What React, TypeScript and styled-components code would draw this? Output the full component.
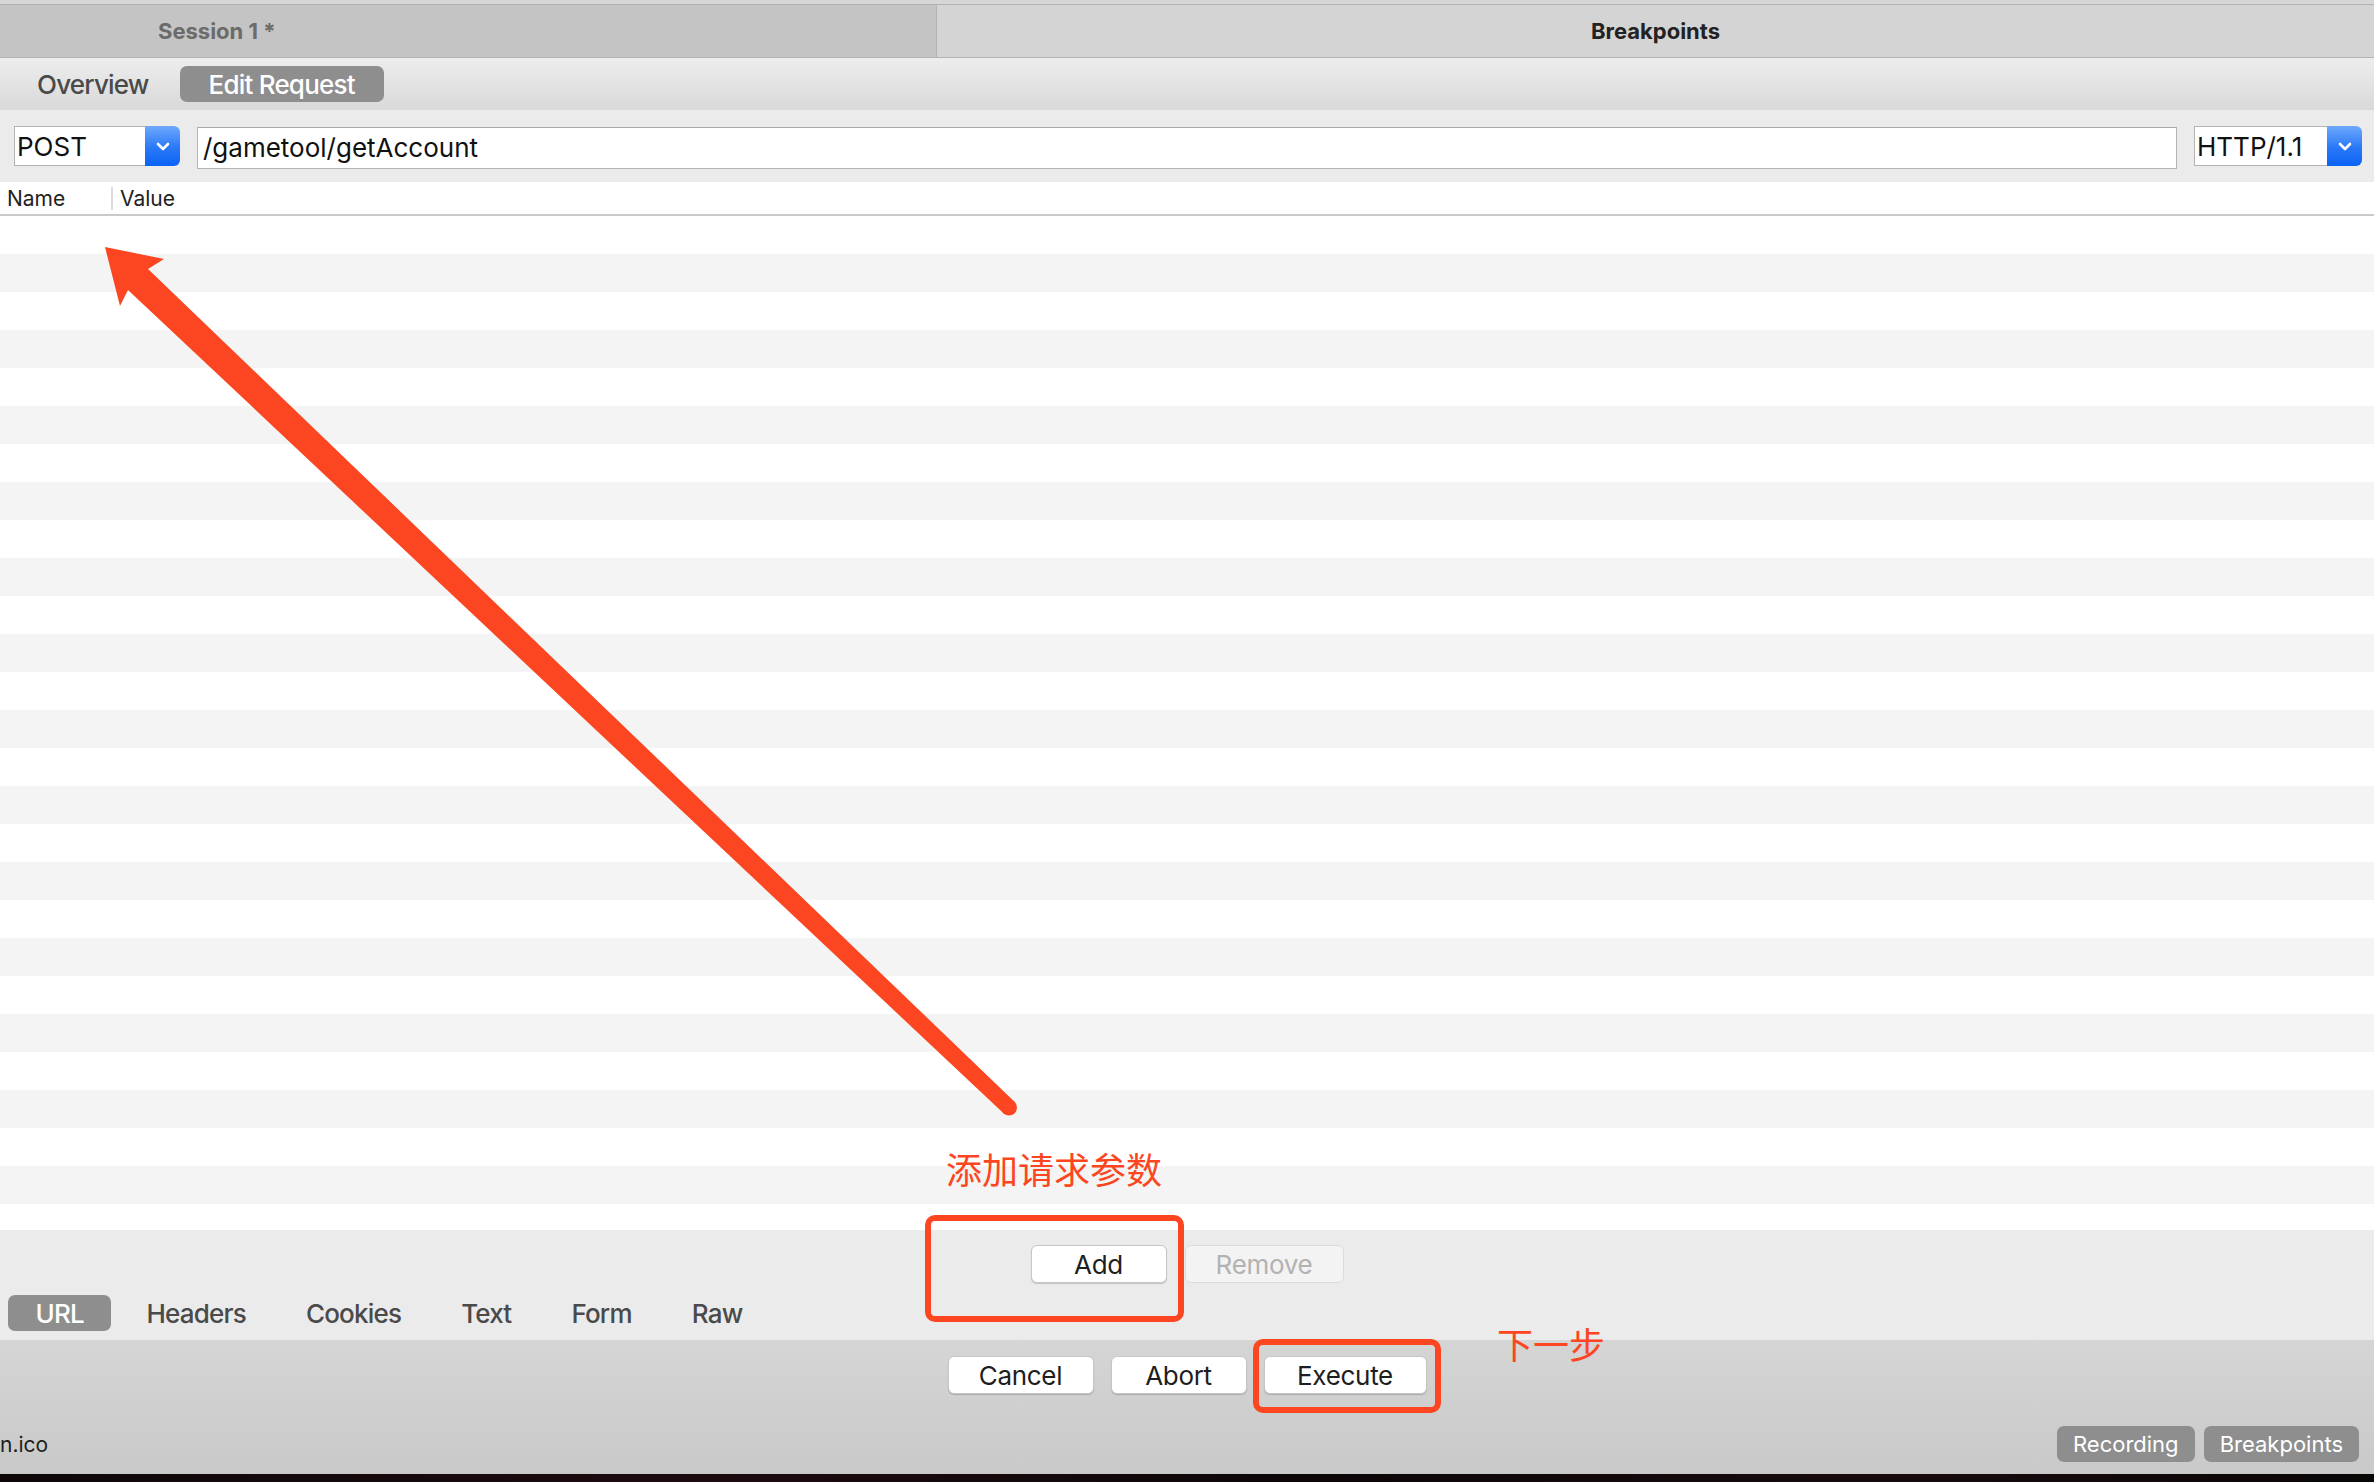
import React from "react";
import styled, { createGlobalStyle } from "styled-components";

const GlobalStyle = createGlobalStyle`
  html, body {
    margin: 0;
    padding: 0;
  }
  body {
    font-family: Inter, "Liberation Sans", "Noto Sans CJK SC", sans-serif;
    background: #0b0708;
    overflow: hidden;
  }
`;

const RED = "#fc4521";

const Window = styled.div`
  position: relative;
  width: 2374px;
  height: 1482px;
  display: flex;
  flex-direction: column;
  background: #fff;
  overflow: hidden;
`;

const TitleStrip = styled.div`
  flex: none;
  height: 4px;
  background: #d6d6d6;
  border-bottom: 1px solid #b3b3b3;
`;

const SessionTabs = styled.div`
  flex: none;
  height: 52px;
  display: grid;
  grid-template-columns: 937px 1fr;
  border-bottom: 1px solid #b3b3b3;
`;

const SessionTab = styled.div<{ $active?: boolean }>`
  display: flex;
  align-items: center;
  justify-content: ${(p) => (p.$active ? "center" : "flex-start")};
  padding-left: ${(p) => (p.$active ? "0" : "158px")};
  background: ${(p) => (p.$active ? "#d4d4d4" : "#c4c4c4")};
  color: ${(p) => (p.$active ? "#222" : "#6b6b6b")};
  border-right: ${(p) => (p.$active ? "none" : "1px solid #b3b3b3")};
  font-size: 22px;
  font-weight: 700;
`;

const Toolbar = styled.div`
  flex: none;
  height: 52px;
  display: flex;
  align-items: center;
  gap: 2px;
  padding-left: 8px;
  background: linear-gradient(#ededed, #d9d9d9);
`;

const Segment = styled.div<{ $selected?: boolean }>`
  height: 36px;
  padding: 0 29px;
  display: flex;
  align-items: center;
  border-radius: 7px;
  font-size: 26px;
  font-weight: 500;
  letter-spacing: -0.8px;
  color: ${(p) => (p.$selected ? "#fff" : "#4a4a4a")};
  background: ${(p) => (p.$selected ? "#8e8e8e" : "transparent")};
`;

const RequestLine = styled.div`
  flex: none;
  height: 72px;
  display: flex;
  align-items: center;
  gap: 17px;
  padding: 0 12px 0 14px;
  background: #ebebeb;
`;

const Select = styled.div<{ $width: number }>`
  flex: none;
  width: ${(p) => p.$width}px;
  height: 40px;
  display: flex;
`;

const SelectValue = styled.div`
  flex: 1;
  display: flex;
  align-items: center;
  padding-left: 2px;
  background: #fff;
  border: 1px solid #b4b4b4;
  border-right: none;
  font-size: 26px;
  color: #111;
`;

const SelectButton = styled.div`
  width: 35px;
  display: flex;
  align-items: center;
  justify-content: center;
  border-radius: 0 6px 6px 0;
  background: linear-gradient(#6ea8fc, #2a78f7 55%, #0a62f4);
`;

const UrlField = styled.div`
  flex: 1;
  height: 40px;
  margin-top: 3px;
  display: flex;
  align-items: center;
  padding-left: 5px;
  background: #fff;
  border: 1px solid #b4b4b4;
  border-top-color: #a9a9a9;
  font-size: 26px;
  color: #111;
`;

const TableHeader = styled.div`
  flex: none;
  height: 32px;
  display: flex;
  align-items: center;
  background: #fff;
  border-bottom: 2px solid #c9c9c9;
  font-size: 21px;
  color: #222;
`;

const HeaderCell = styled.div<{ $width?: number }>`
  flex: ${(p) => (p.$width ? "none" : "1")};
  width: ${(p) => (p.$width ? `${p.$width}px` : "auto")};
  padding-left: 7px;
  box-sizing: border-box;
`;

const ColumnDivider = styled.div`
  width: 2px;
  height: 23px;
  background: #dcdcdc;
`;

const TableBody = styled.div`
  flex: 1;
  overflow: hidden;
`;

const Row = styled.div`
  height: 38px;
  background: #fff;
  &:nth-child(even) {
    background: #f4f4f4;
  }
`;

const BottomPanel = styled.div`
  flex: none;
  height: 110px;
  box-sizing: border-box;
  padding-top: 15px;
  display: flex;
  flex-direction: column;
  gap: 12px;
  background: #ebebeb;
`;

const ButtonRow = styled.div<{ $gap: number }>`
  display: flex;
  justify-content: center;
  gap: ${(p) => p.$gap}px;
`;

const Button = styled.div<{ $width: number; $disabled?: boolean }>`
  width: ${(p) => p.$width}px;
  height: 38px;
  box-sizing: border-box;
  display: flex;
  align-items: center;
  justify-content: center;
  border-radius: 6px;
  font-size: 26px;
  letter-spacing: -0.3px;
  color: ${(p) => (p.$disabled ? "#b2b2b2" : "#1e1e1e")};
  background: ${(p) => (p.$disabled ? "#f3f3f3" : "#fff")};
  border: 1px solid ${(p) => (p.$disabled ? "#dcdcdc" : "#c6c6c6")};
  box-shadow: ${(p) => (p.$disabled ? "none" : "0 1px 1px rgba(0, 0, 0, 0.18)")};
`;

const ViewTabs = styled.div`
  height: 36px;
  display: flex;
  align-items: center;
  gap: 10px;
  padding-left: 8px;
`;

const ViewTab = styled.div<{ $selected?: boolean }>`
  height: 36px;
  padding: 0 ${(p) => (p.$selected ? "27.5px" : "25px")};
  display: flex;
  align-items: center;
  border-radius: 7px;
  font-size: 26px;
  font-weight: 500;
  letter-spacing: -0.8px;
  color: ${(p) => (p.$selected ? "#fff" : "#4a4a4a")};
  background: ${(p) => (p.$selected ? "#8e8e8e" : "transparent")};
`;

const ActionBar = styled.div`
  flex: none;
  height: 134px;
  box-sizing: border-box;
  padding-top: 16px;
  display: flex;
  flex-direction: column;
  gap: 32px;
  background: linear-gradient(#d5d5d5, #c9c9c9);
`;

const StatusRow = styled.div`
  height: 36px;
  display: flex;
  align-items: center;
  justify-content: space-between;
  padding-right: 15px;
`;

const StatusText = styled.div`
  font-size: 21px;
  color: #1e1e1e;
`;

const StatusPills = styled.div`
  display: flex;
  gap: 9px;
`;

const StatusPill = styled.div`
  height: 36px;
  padding: 0 16px;
  display: flex;
  align-items: center;
  border-radius: 7px;
  background: #8e8e8e;
  color: #fff;
  font-size: 22px;
`;

const DesktopEdge = styled.div`
  flex: none;
  height: 8px;
  background: linear-gradient(90deg, #0d0708, #1c0a0f 30%, #0c0607 55%, #170a0d 80%, #0a0606);
`;

/* annotations drawn over the window */
const Overlay = styled.svg`
  position: absolute;
  inset: 0;
  pointer-events: none;
`;

const Highlight = styled.div<{ $x: number; $y: number; $w: number; $h: number }>`
  position: absolute;
  left: ${(p) => p.$x}px;
  top: ${(p) => p.$y}px;
  width: ${(p) => p.$w}px;
  height: ${(p) => p.$h}px;
  box-sizing: border-box;
  border: 6px solid ${RED};
  border-radius: 10px;
  pointer-events: none;
`;

const Note = styled.div<{ $x: number; $y: number }>`
  position: absolute;
  left: ${(p) => p.$x}px;
  top: ${(p) => p.$y}px;
  font-family: "Noto Sans CJK SC", sans-serif;
  font-size: 36px;
  line-height: 36px;
  color: ${RED};
  white-space: nowrap;
`;

function Chevron() {
  return (
    <svg width="14" height="9" viewBox="0 0 14 9">
      <path d="M2 2 L7 7 L12 2" fill="none" stroke="#fff" strokeWidth="2.6" strokeLinecap="round" strokeLinejoin="round" />
    </svg>
  );
}

function Dropdown({ value, width }: { value: string; width: number }) {
  return (
    <Select $width={width}>
      <SelectValue>{value}</SelectValue>
      <SelectButton>
        <Chevron />
      </SelectButton>
    </Select>
  );
}

const rows = Array.from({ length: 27 }, (_, i) => i);

export default function App() {
  return (
    <>
      <GlobalStyle />
      <Window>
        <TitleStrip />
        <SessionTabs>
          <SessionTab>Session 1 *</SessionTab>
          <SessionTab $active>Breakpoints</SessionTab>
        </SessionTabs>

        <Toolbar>
          <Segment>Overview</Segment>
          <Segment $selected>Edit Request</Segment>
        </Toolbar>

        <RequestLine>
          <Dropdown value="POST" width={166} />
          <UrlField>/gametool/getAccount</UrlField>
          <Dropdown value="HTTP/1.1" width={168} />
        </RequestLine>

        <TableHeader>
          <HeaderCell $width={111}>Name</HeaderCell>
          <ColumnDivider />
          <HeaderCell>Value</HeaderCell>
        </TableHeader>
        <TableBody>
          {rows.map((r) => (
            <Row key={r} />
          ))}
        </TableBody>

        <BottomPanel>
          <ButtonRow $gap={18}>
            <Button $width={136}>Add</Button>
            <Button $width={159} $disabled>
              Remove
            </Button>
          </ButtonRow>
          <ViewTabs>
            <ViewTab $selected>URL</ViewTab>
            <ViewTab>Headers</ViewTab>
            <ViewTab>Cookies</ViewTab>
            <ViewTab>Text</ViewTab>
            <ViewTab>Form</ViewTab>
            <ViewTab>Raw</ViewTab>
          </ViewTabs>
        </BottomPanel>

        <ActionBar>
          <ButtonRow $gap={17}>
            <Button $width={146}>Cancel</Button>
            <Button $width={136}>Abort</Button>
            <Button $width={163}>Execute</Button>
          </ButtonRow>
          <StatusRow>
            <StatusText>n.ico</StatusText>
            <StatusPills>
              <StatusPill>Recording</StatusPill>
              <StatusPill>Breakpoints</StatusPill>
            </StatusPills>
          </StatusRow>
        </ActionBar>
        <DesktopEdge />

        <Overlay width="2374" height="1482" viewBox="0 0 2374 1482">
          <path
            d="M105 247 L164 259 L148 269 L1014.5 1101.7 L1003.5 1113.3 L128 290 L120 306 Z"
            fill={RED}
          />
          <circle cx="1009" cy="1107.5" r="8" fill={RED} />
        </Overlay>
        <Highlight $x={925} $y={1215} $w={259} $h={107} />
        <Highlight $x={1253} $y={1339} $w={188} $h={74} />
        <Note $x={946} $y={1150}>添加请求参数</Note>
        <Note $x={1497} $y={1325}>下一步</Note>
      </Window>
    </>
  );
}
